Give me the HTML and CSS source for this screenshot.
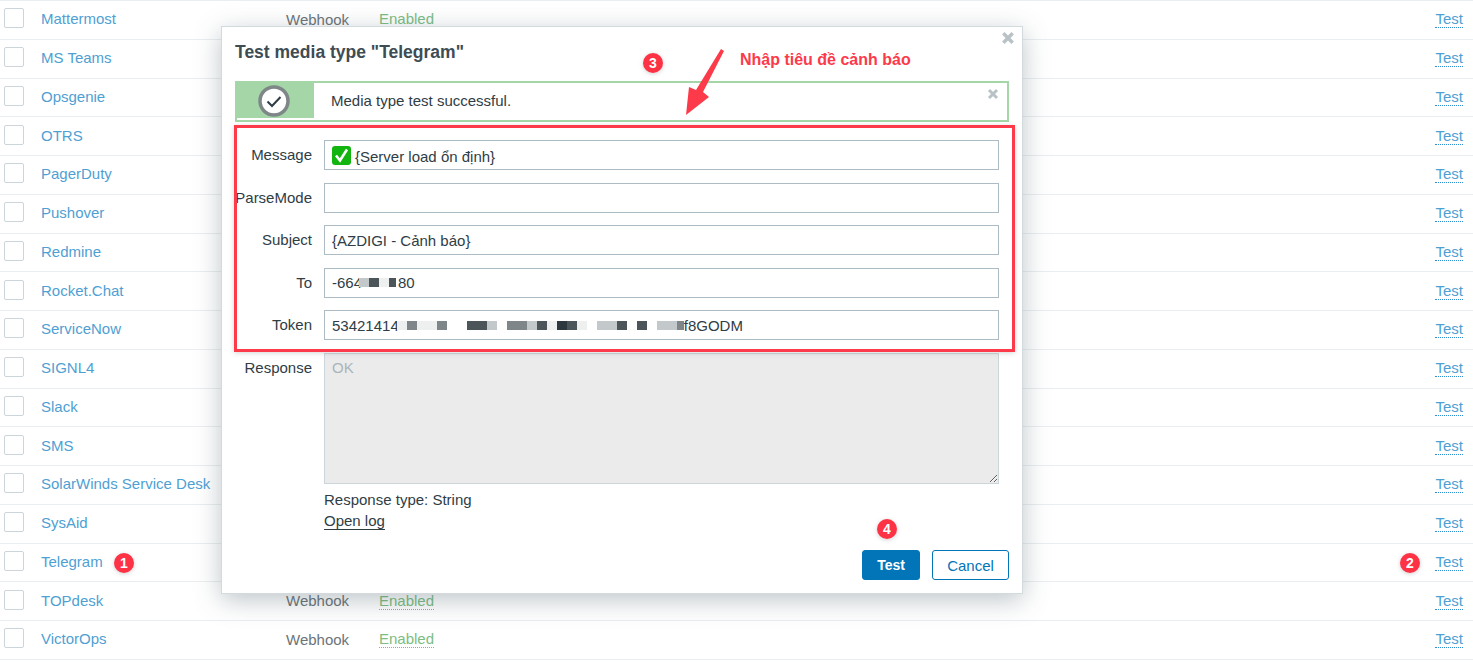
FILE: index.html
```html
<!DOCTYPE html>
<html lang="vi">
<head>
    <meta charset="UTF-8">
    <meta name="viewport" content="width=device-width, initial-scale=1.0">
    <title>Media types</title>
    <link rel="stylesheet" href="styles.css">
</head>
<body>
    <div class="bang">
        <div class="baris"><span class="kotak"></span><a class="nama">Mattermost</a><span class="tipe">Webhook</span><span class="status">Enabled</span><a class="tes">Test</a></div>
        <div class="baris"><span class="kotak"></span><a class="nama">MS Teams</a><span class="tipe">Webhook</span><span class="status">Enabled</span><a class="tes">Test</a></div>
        <div class="baris"><span class="kotak"></span><a class="nama">Opsgenie</a><span class="tipe">Webhook</span><span class="status">Enabled</span><a class="tes">Test</a></div>
        <div class="baris"><span class="kotak"></span><a class="nama">OTRS</a><span class="tipe">Webhook</span><span class="status">Enabled</span><a class="tes">Test</a></div>
        <div class="baris"><span class="kotak"></span><a class="nama">PagerDuty</a><span class="tipe">Webhook</span><span class="status">Enabled</span><a class="tes">Test</a></div>
        <div class="baris"><span class="kotak"></span><a class="nama">Pushover</a><span class="tipe">Webhook</span><span class="status">Enabled</span><a class="tes">Test</a></div>
        <div class="baris"><span class="kotak"></span><a class="nama">Redmine</a><span class="tipe">Webhook</span><span class="status">Enabled</span><a class="tes">Test</a></div>
        <div class="baris"><span class="kotak"></span><a class="nama">Rocket.Chat</a><span class="tipe">Webhook</span><span class="status">Enabled</span><a class="tes">Test</a></div>
        <div class="baris"><span class="kotak"></span><a class="nama">ServiceNow</a><span class="tipe">Webhook</span><span class="status">Enabled</span><a class="tes">Test</a></div>
        <div class="baris"><span class="kotak"></span><a class="nama">SIGNL4</a><span class="tipe">Webhook</span><span class="status">Enabled</span><a class="tes">Test</a></div>
        <div class="baris"><span class="kotak"></span><a class="nama">Slack</a><span class="tipe">Webhook</span><span class="status">Enabled</span><a class="tes">Test</a></div>
        <div class="baris"><span class="kotak"></span><a class="nama">SMS</a><span class="tipe">SMS</span><span class="status">Enabled</span><a class="tes">Test</a></div>
        <div class="baris"><span class="kotak"></span><a class="nama">SolarWinds Service Desk</a><span class="tipe">Webhook</span><span class="status">Enabled</span><a class="tes">Test</a></div>
        <div class="baris"><span class="kotak"></span><a class="nama">SysAid</a><span class="tipe">Webhook</span><span class="status">Enabled</span><a class="tes">Test</a></div>
        <div class="baris"><span class="kotak"></span><a class="nama">Telegram</a><span class="tipe">Webhook</span><span class="status">Enabled</span><a class="tes">Test</a></div>
        <div class="baris"><span class="kotak"></span><a class="nama">TOPdesk</a><span class="tipe">Webhook</span><span class="status">Enabled</span><a class="tes">Test</a></div>
        <div class="baris"><span class="kotak"></span><a class="nama">VictorOps</a><span class="tipe">Webhook</span><span class="status">Enabled</span><a class="tes">Test</a></div>
    </div>

    <div class="modal">
        <svg class="tutup tutup-modal" viewBox="0 0 12 12"><path d="M2 2l8 8M10 2l-8 8"/></svg>
        <h1 class="judul">Test media type "Telegram"</h1>

        <div class="pesan">
            <div class="pesan-ikon">
                <svg width="32" height="32" viewBox="0 0 32 32">
                    <circle cx="16" cy="16" r="14" fill="#fff" stroke="#7f8688" stroke-width="3.5"/>
                    <path d="M9.5 16.5l4.5 4.5 8.5-9" fill="none" stroke="#2f3d45" stroke-width="2"/>
                </svg>
            </div>
            <span class="pesan-teks">Media type test successful.</span>
            <svg class="tutup tutup-pesan" viewBox="0 0 12 12"><path d="M2 2l8 8M10 2l-8 8"/></svg>
        </div>

        <div class="form">
            <label class="label">Message</label>
            <div class="isian">
                <svg class="emoji" viewBox="0 0 19 19">
                    <rect width="19" height="19" rx="3" fill="#12b50f"/>
                    <path d="M4 9.5l4 5 7-11" fill="none" stroke="#fff" stroke-width="2.6"/>
                </svg>
                <span class="isian-pesan">{Server load ổn định}</span>
            </div>

            <label class="label">ParseMode</label>
            <input class="isian" type="text">

            <label class="label">Subject</label>
            <input class="isian" type="text" value="{AZDIGI - Cảnh báo}">

            <label class="label">To</label>
            <div class="isian">
                <span>-664</span>
                <span class="buram buram-to">
                    <i class="b-muda"></i><i class="b-gelap"></i><i class="b-pucat"></i><i class="b-gelap b-kecil"></i>
                </span>
                <span>80</span>
            </div>

            <label class="label">Token</label>
            <div class="isian">
                <span>53421414</span>
                <span class="buram buram-token">
                    <i class="b-pucat"></i><i class="b-abu"></i><i class="b-pucat"></i><i class="b-pucat"></i><i class="b-abu"></i><i></i><i></i><i class="b-gelap"></i><i class="b-gelap"></i><i class="b-muda"></i><i></i><i class="b-abu"></i><i class="b-abu"></i><i class="b-muda"></i><i class="b-gelap"></i><i class="b-pucat"></i><i class="b-hitam"></i><i class="b-gelap"></i><i class="b-pucat"></i><i></i><i class="b-muda"></i><i class="b-muda"></i><i class="b-gelap"></i><i></i><i class="b-gelap"></i><i></i><i class="b-muda"></i><i class="b-muda"></i><i class="b-abu b-kecil"></i>
                </span>
                <span>f8GODM</span>
            </div>

            <label class="label">Response</label>
            <div class="respon">
                <textarea class="respon-isi" readonly>OK</textarea>
                <div class="respon-tipe">Response type: String</div>
                <a class="respon-log">Open log</a>
            </div>
        </div>

        <div class="kaki">
            <button class="btn-utama">Test</button>
            <button class="btn-batal">Cancel</button>
        </div>
    </div>

    <!-- coretan merah di atas screenshot -->
    <div class="kotak-merah"></div>
    <div class="catatan">Nhập tiêu đề cảnh báo</div>
    <svg class="panah" width="46" height="74" viewBox="0 0 46 74">
        <path d="M40 3L43 5 22 46 28 51 5 69 8 41 15 44z"/>
    </svg>
    <span class="lencana lencana-1">1</span>
    <span class="lencana lencana-2">2</span>
    <span class="lencana lencana-3">3</span>
    <span class="lencana lencana-4">4</span>
</body>
</html>
```

FILE: styles.css
```css
body {
  margin: 0;
  height: 663px;
  overflow: hidden;
  background-color: #fff;
  font-family: "Liberation Sans", Arial, sans-serif;
  font-size: 15px;
  color: #2f3d45;
}

.bang {
  border-top: 1px solid #ebeef0;
}

.baris {
  display: grid;
  grid-template-columns: 41px 245px 93px 1fr auto;
  align-items: center;
  height: 38.75px;
  box-sizing: border-box;
  padding-right: 10px;
  border-bottom: 1px solid #ebeef0;
}

.kotak {
  width: 20px;
  height: 20px;
  box-sizing: border-box;
  margin-left: 4px;
  margin-bottom: 3px;
  border: 1px solid #ccd5d9;
  border-radius: 2px;
}

.nama {
  margin-bottom: 2px;
  color: #4f9fd3;
  white-space: nowrap;
}

.tipe {
  margin-bottom: 1px;
  color: #6b7478;
}

.status {
  justify-self: start;
  color: #7cbd82;
  border-bottom: 1px dotted #7cbd82;
  line-height: 16px;
}

.tes {
  color: #4f9fd3;
  border-bottom: 1px dotted #2d8fd0;
  line-height: 16px;
}

.modal {
  position: absolute;
  left: 221px;
  top: 26px;
  width: 802px;
  height: 568px;
  box-sizing: border-box;
  padding: 0 13px 13px 13px;
  display: flex;
  flex-direction: column;
  background-color: #fff;
  border: 1px solid #d3dade;
  box-shadow: 0 6px 24px rgba(70, 90, 100, 0.35);
}

.judul {
  margin: 0;
  padding-top: 15px;
  height: 39px;
  box-sizing: border-box;
  font-size: 17.5px;
  line-height: 20px;
  color: #3e4c54;
}

.tutup {
  position: absolute;
  width: 14px;
  height: 14px;
  fill: none;
  stroke: #b9c2c6;
  stroke-width: 3;
}

.tutup-modal {
  right: 7px;
  top: 4px;
}

.tutup-pesan {
  width: 12px;
  height: 12px;
  right: 8px;
  top: 5px;
}

.pesan {
  position: relative;
  display: flex;
  height: 41px;
  margin-top: 15px;
  box-sizing: border-box;
  padding-bottom: 2px;
  border: 2px solid #a5d6a7;
}

.pesan-ikon {
  width: 77px;
  box-sizing: border-box;
  padding-right: 3px;
  display: flex;
  align-items: center;
  justify-content: center;
  background-color: #a5d6a7;
}

.pesan-teks {
  margin-left: 17px;
  align-self: center;
}

.form {
  display: grid;
  grid-template-columns: 77px 675px;
  column-gap: 12px;
  row-gap: 12.5px;
  margin-top: 18px;
}

.label {
  text-align: right;
  line-height: 30px;
  white-space: nowrap;
}

.isian {
  display: flex;
  align-items: center;
  height: 30px;
  box-sizing: border-box;
  margin: 0;
  padding: 0 7px;
  border: 1px solid #acbbc4;
  background-color: #fff;
  font-family: inherit;
  font-size: 15px;
  color: #2f3d45;
  outline: none;
  white-space: nowrap;
}

.isian-pesan {
  margin-top: 2px;
}

.emoji {
  width: 19px;
  height: 19px;
  margin-right: 4px;
}

.buram {
  display: flex;
  height: 9px;
}

.buram i {
  width: 10px;
}

.buram-to {
  margin-left: -3px;
  margin-right: 2px;
}

.buram-token {
  margin-left: -2px;
}

.buram .b-kecil {
  width: 7px;
}

.b-pucat { background-color: #eef0f0; }
.b-muda { background-color: #c3c8ca; }
.b-abu { background-color: #7f8689; }
.b-gelap { background-color: #4c555a; }
.b-hitam { background-color: #2c383e; }

.respon-isi {
  display: block;
  width: 675px;
  height: 131px;
  box-sizing: border-box;
  margin: 0;
  padding: 5px 7px;
  border: 1px solid #ccd5d9;
  background-color: #ebebeb;
  font-family: inherit;
  font-size: 15px;
  color: #a9b5bb;
  outline: none;
  resize: both;
}

.respon-tipe {
  margin-top: 8px;
  line-height: 16px;
}

.respon-log {
  display: inline-block;
  margin-top: 5px;
  line-height: 16px;
  border-bottom: 1px solid #2f3d45;
}

.kaki {
  display: flex;
  justify-content: flex-end;
  gap: 12px;
  margin-top: auto;
}

.btn-utama,
.btn-batal {
  height: 30px;
  padding: 0;
  border-radius: 3px;
  font-family: inherit;
  font-size: 15px;
}

.btn-utama {
  width: 58px;
  border: 1px solid #0275b8;
  background-color: #0275b8;
  color: #fff;
  font-size: 14px;
  font-weight: bold;
}

.btn-batal {
  width: 77px;
  border: 1px solid #0275b8;
  background-color: #fff;
  color: #0275b8;
}

.kotak-merah {
  position: absolute;
  left: 234px;
  top: 125px;
  width: 781px;
  height: 227px;
  box-sizing: border-box;
  border: 3px solid #fd3a4a;
  box-shadow: 0 1px 5px rgba(120, 120, 120, 0.3);
}

.catatan {
  position: absolute;
  left: 740px;
  top: 51px;
  font-size: 16px;
  line-height: 18px;
  font-weight: bold;
  color: #fd3a4a;
}

.panah {
  position: absolute;
  left: 681px;
  top: 46px;
  fill: #fd3a4a;
}

.lencana {
  position: absolute;
  width: 20px;
  height: 20px;
  display: flex;
  align-items: center;
  justify-content: center;
  border-radius: 50%;
  background-color: #fd3345;
  color: #fff;
  font-size: 14px;
  font-weight: bold;
  box-shadow: 0 1px 4px rgba(120, 120, 120, 0.35);
}

.lencana-1 { left: 114px; top: 553px; }
.lencana-2 { left: 1400px; top: 553px; }
.lencana-3 { left: 643px; top: 53px; }
.lencana-4 { left: 877px; top: 519px; }
```
